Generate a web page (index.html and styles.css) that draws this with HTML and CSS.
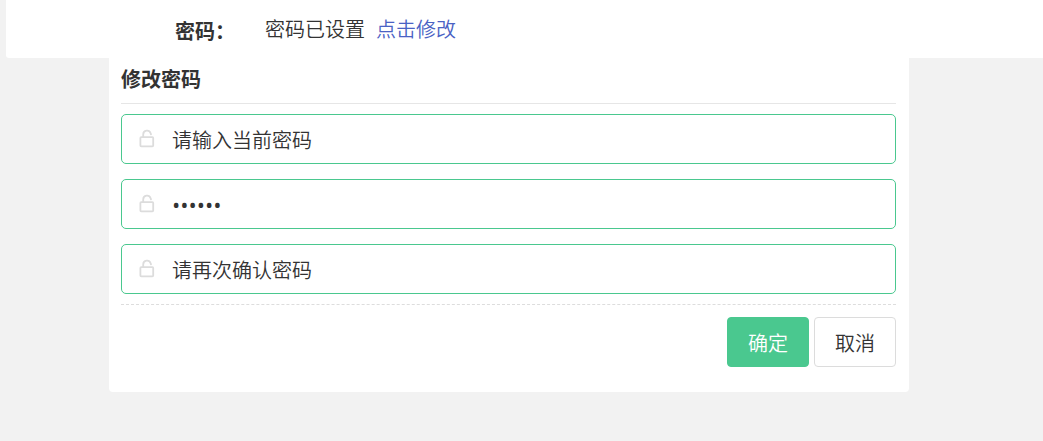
FILE: index.html
```html
<!DOCTYPE html>
<html lang="zh-CN">
<head>
  <meta charset="UTF-8">
  <meta name="viewport" content="width=device-width, initial-scale=1.0">
  <title>修改密码</title>
  <link rel="stylesheet" href="styles.css">
</head>
<body>
  <svg class="icon-defs" aria-hidden="true">
    <symbol id="lock" viewBox="0 0 16 20">
      <rect x="1.4" y="8.2" width="12.8" height="9.2" rx="0.8"/>
      <path d="M4.2 8.2V5.4a3.8 3.8 0 0 1 7.4-1.2l.4 1.2"/>
    </symbol>
  </svg>

  <div class="setting-row">
    <div class="setting-label">密码：</div>
    <div class="setting-value">
      <span>密码已设置</span>
      <a href="#password-form">点击修改</a>
    </div>
  </div>

  <form class="panel" id="password-form">
    <h2 class="panel-title">修改密码</h2>
    <div class="fields">
      <label class="field">
        <svg class="lock-icon" aria-hidden="true"><use href="#lock"/></svg>
        <input type="password" name="current" placeholder="请输入当前密码" aria-label="当前密码">
      </label>
      <label class="field">
        <svg class="lock-icon" aria-hidden="true"><use href="#lock"/></svg>
        <input class="filled" type="password" name="password" value="123456" aria-label="新密码">
      </label>
      <label class="field">
        <svg class="lock-icon" aria-hidden="true"><use href="#lock"/></svg>
        <input type="password" name="confirm" placeholder="请再次确认密码" aria-label="确认密码">
      </label>
    </div>
    <div class="actions">
      <button class="btn btn-primary" type="submit">确定</button>
      <button class="btn" type="button">取消</button>
    </div>
  </form>
</body>
</html>
```
FILE: styles.css
```css
* {
  box-sizing: border-box;
}
body {
  margin: 0;
  background: #f2f2f2;
  color: #333;
  font-family: "Noto Sans CJK SC", sans-serif;
  font-size: 20px;
  font-weight: 350;
  line-height: 30px;
}
.icon-defs {
  display: none;
}
.setting-row {
  display: flex;
  height: 58px;
  margin-left: 6px;
  padding: 14px 0;
  background: #fff;
  border-radius: 0 0 0 3px;
}
.setting-label {
  width: 259px;
  padding: 2px 30px 0 0;
  text-align: right;
  font-weight: bold;
}
.setting-value {
  display: flex;
  gap: 11px;
}
.setting-value a {
  color: #4a62c4;
  text-decoration: none;
}
.panel {
  max-width: 800px;
  margin-left: 109px;
  padding: 0 13px 25px 12px;
  background: #fff;
  border-radius: 0 0 4px 4px;
}
.panel-title {
  margin: 0;
  padding: 6px 0 9px;
  border-bottom: 1px solid #e6e6e6;
  font-size: 20px;
  line-height: 30px;
}
.fields {
  display: flex;
  flex-direction: column;
  gap: 15px;
  padding: 10px 0;
  border-bottom: 1px dashed #ddd;
}
.field {
  display: flex;
  align-items: center;
  gap: 17px;
  height: 50px;
  padding: 0 17px;
  border: 1px solid #4ac88f;
  border-radius: 5px;
}
.lock-icon {
  width: 16px;
  height: 20px;
  fill: none;
  stroke: #dcdcdc;
  stroke-width: 1.8;
  stroke-linecap: round;
}
.field input {
  flex: 1;
  min-width: 0;
  height: 48px;
  padding: 0;
  border: 0;
  outline: 0;
  background: none;
  color: #333;
  font: inherit;
}
.field input.filled {
  font-family: "Open Sans", sans-serif;
  font-size: 22px;
  font-weight: 400;
}
.field input::placeholder {
  color: #333;
  opacity: 1;
}
.actions {
  display: flex;
  justify-content: flex-end;
  gap: 5px;
  padding-top: 12px;
}
.btn {
  width: 82px;
  height: 50px;
  padding: 2px 0 0;
  border: 1px solid #dcdcdc;
  border-radius: 4px;
  background: #fff;
  color: #333;
  font: inherit;
  cursor: pointer;
}
.btn-primary {
  border-color: #4ac88f;
  background: #4ac88f;
  color: #fff;
}
```
